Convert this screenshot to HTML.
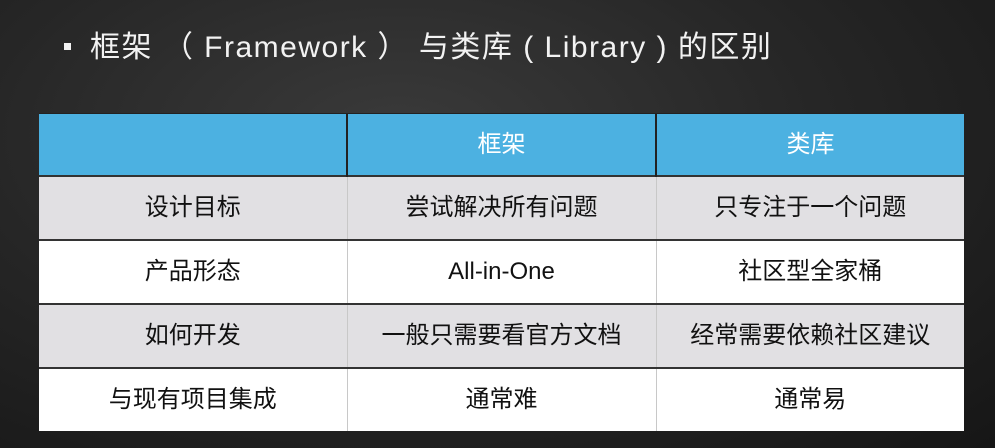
<!DOCTYPE html>
<html><head><meta charset="utf-8"><style>
body{margin:0;width:995px;height:448px;overflow:hidden;background:#1e1e1e;font-family:"Liberation Sans","Noto Sans CJK SC",sans-serif;position:relative}
.bg{position:absolute;inset:0;background:radial-gradient(ellipse at 40% 30%,#3a3a3a 0%,#262626 50%,#161616 100%)}
.title{position:absolute;left:64px;top:27px;color:#f2f2f2;font-size:30px;letter-spacing:1.5px;white-space:pre;line-height:42px}
.title .b{display:inline-block;width:7px;height:7px;background:#f2f2f2;vertical-align:middle;margin-right:19px;position:relative;top:-3px}
table{position:absolute;left:39px;top:113px;width:925px;border-collapse:collapse;font-size:24px;color:#111}
td{text-align:center;border-left:1px solid #c8c8c8;border-top:2px solid #333;padding:0;height:62px;line-height:30px}
td:first-child{border-left:none}
tr.h td{background:#4cb1e1;color:#fff;height:61px;border-top:1px solid #222;border-left:2px solid #222}
tr.h td:first-child{border-left:none}
tr.g td{background:#e1e0e3}
tr.w td{background:#fff}
</style></head><body><div class="bg"></div>
<div class="title"><span class="b"></span>框架 （ Framework ） 与类库 ( Library ) 的区别</div>
<table>
<tr class="h"><td style="width:307px"></td><td style="width:307px">框架</td><td>类库</td></tr>
<tr class="g"><td>设计目标</td><td>尝试解决所有问题</td><td>只专注于一个问题</td></tr>
<tr class="w"><td>产品形态</td><td>All-in-One</td><td>社区型全家桶</td></tr>
<tr class="g"><td>如何开发</td><td>一般只需要看官方文档</td><td>经常需要依赖社区建议</td></tr>
<tr class="w"><td>与现有项目集成</td><td>通常难</td><td>通常易</td></tr>
</table>
</body></html>
